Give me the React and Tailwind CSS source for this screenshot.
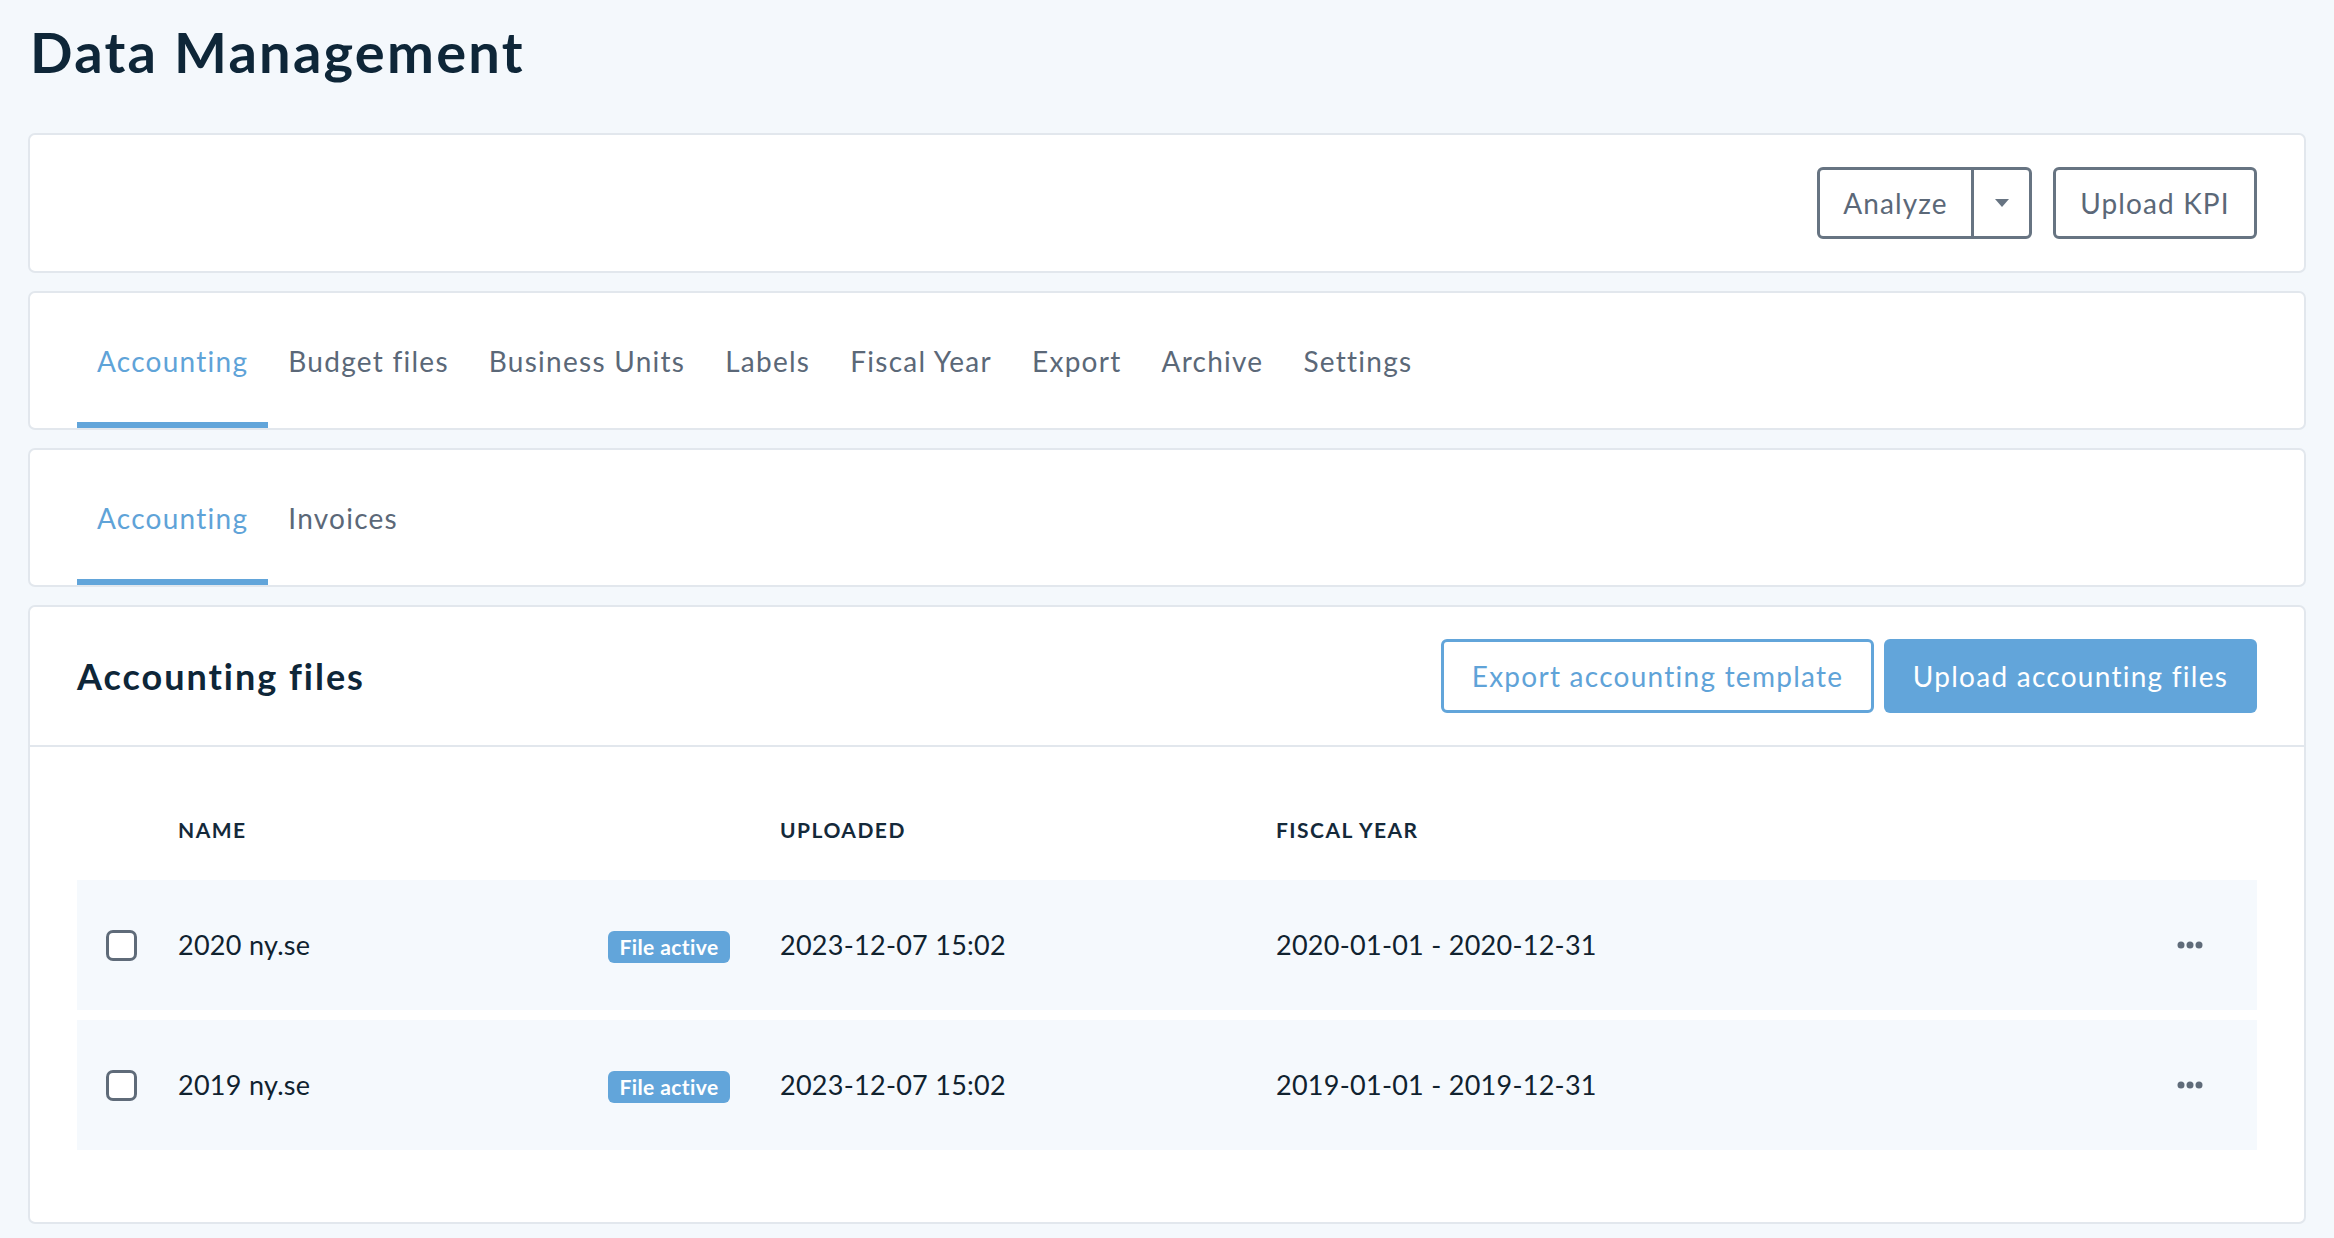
import React from 'react';

const tabs = ['Accounting', 'Budget files', 'Business Units', 'Labels', 'Fiscal Year', 'Export', 'Archive', 'Settings'];
const subTabs = ['Accounting', 'Invoices'];

const files = [
  { name: '2020 ny.se', uploaded: '2023-12-07 15:02', fiscal: '2020-01-01 - 2020-12-31' },
  { name: '2019 ny.se', uploaded: '2023-12-07 15:02', fiscal: '2019-01-01 - 2019-12-31' },
];

const card = 'bg-white border-2 border-[#e2e7ed] rounded-[7px]';
const grid = 'grid grid-cols-[101px_430px_172px_496px_1fr_80px] items-center';

function TabBar({ items }) {
  return (
    <div className={`${card} h-[139px] px-[47px] flex items-stretch`}>
      {items.map((t, i) => (
        <div
          key={t}
          className={`relative flex items-center px-5 text-[28px] tracking-[0.045em] ${
            i === 0 ? 'text-[#5fa3d8]' : 'text-[#5b6878]'
          }`}
        >
          {t}
          {i === 0 && <span className="absolute left-0 right-0 bottom-0 h-[6px] bg-[#62a5da]" />}
        </div>
      ))}
    </div>
  );
}

function Dots() {
  return (
    <svg width="26" height="8" viewBox="0 0 26 8" fill="#5f6b79">
      <circle cx="4" cy="4" r="3.5" />
      <circle cx="13" cy="4" r="3.5" />
      <circle cx="22" cy="4" r="3.5" />
    </svg>
  );
}

export default function App() {
  return (
    <div className="min-h-screen bg-[#f4f8fc] px-[28px] pt-[20px] pb-10 font-['Lato',sans-serif]">
      <h1 className="pl-[2px] text-[56px] leading-[64px] font-bold text-[#0e2638] tracking-[0.04em]">
        Data Management
      </h1>

      <div className="mt-[49px] flex flex-col gap-[18px]">
        {/* actions */}
        <div className={`${card} h-[140px] px-[47px] flex items-center justify-end gap-[21px]`}>
          <div className="flex h-[72px] border-[3px] border-[#677482] rounded-[6px] text-[#5b6878] text-[28px] tracking-[0.04em]">
            <button className="w-[154px] flex items-center justify-center border-r-[3px] border-[#677482]">
              Analyze
            </button>
            <button className="w-[55px] flex items-center justify-center">
              <svg width="14" height="8" viewBox="0 0 14 8" fill="#677482">
                <path d="M0 0h14L7 8z" />
              </svg>
            </button>
          </div>
          <button className="h-[72px] w-[204px] border-[3px] border-[#677482] rounded-[6px] text-[#5b6878] text-[28px] tracking-[0.04em]">
            Upload KPI
          </button>
        </div>

        <TabBar items={tabs} />
        <TabBar items={subTabs} />

        {/* files */}
        <div className={`${card} pb-[72px]`}>
          <div className="h-[140px] px-[47px] flex items-center justify-between border-b-2 border-[#e2e7ed]">
            <h2 className="text-[36px] font-bold text-[#0e2638] tracking-[0.055em]">Accounting files</h2>
            <div className="flex gap-[10px]">
              <button className="h-[74px] w-[433px] border-[3px] border-[#62a5da] rounded-[6px] bg-white text-[#5fa3d8] text-[28px] tracking-[0.045em]">
                Export accounting template
              </button>
              <button className="h-[74px] w-[373px] rounded-[6px] bg-[#62a5da] text-white text-[28px] tracking-[0.045em]">
                Upload accounting files
              </button>
            </div>
          </div>

          <div className="px-[47px] pt-[43px] flex flex-col gap-[10px]">
            <div className={`${grid} h-[80px] text-[21px] font-bold uppercase tracking-[0.07em] text-[#14293a]`}>
              <div />
              <div>Name</div>
              <div />
              <div>Uploaded</div>
              <div>Fiscal Year</div>
              <div />
            </div>
            {files.map((f) => (
              <div key={f.name} className={`${grid} h-[130px] bg-[#f5f9fd] text-[27px] text-[#10222f] tracking-[0.01em]`}>
                <div className="pl-[29px]">
                  <div className="w-[31px] h-[31px] border-[3px] border-[#5f6b79] rounded-[7px] bg-white" />
                </div>
                <div>{f.name}</div>
                <div>
                  <span className="inline-flex items-center justify-center w-[122px] h-[32px] rounded-[6px] bg-[#62a5da] text-white text-[21px] font-bold tracking-[0.02em]">
                    File active
                  </span>
                </div>
                <div>{f.uploaded}</div>
                <div>{f.fiscal}</div>
                <div className="flex">
                  <Dots />
                </div>
              </div>
            ))}
          </div>
        </div>
      </div>
    </div>
  );
}
